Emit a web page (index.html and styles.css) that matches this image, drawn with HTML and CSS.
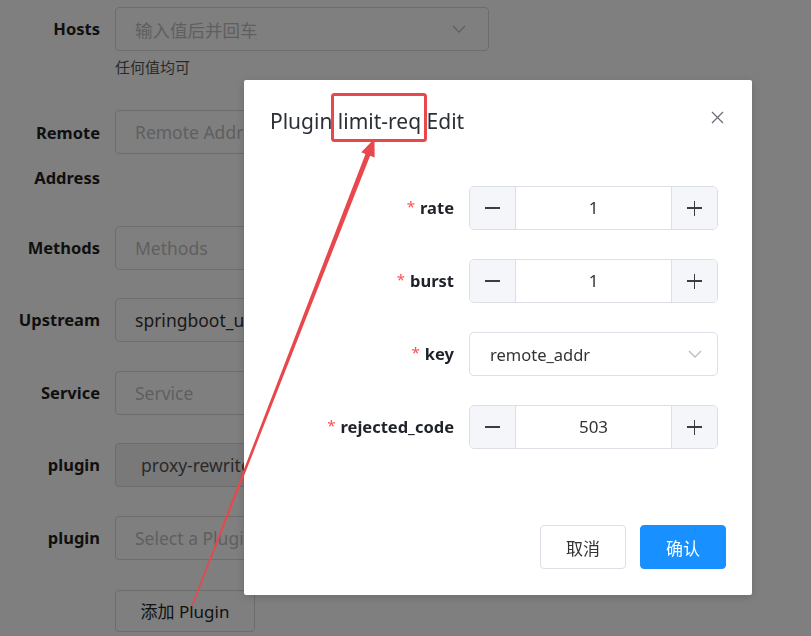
FILE: index.html
```html
<!doctype html>
<html>
<head>
<meta charset="utf-8">
<title>Route Edit</title>
<link rel="stylesheet" href="styles.css">
</head>
<body>
<div class="page">
  <div class="row">
    <label class="lbl">Hosts</label>
    <div class="field">
      <div class="input">
        <span class="ph">输入值后并回车</span>
        <svg class="chev" width="14" height="8" viewBox="0 0 14 8"><path d="M1 1 L7 7 L13 1" fill="none" stroke="#bfbfbf" stroke-width="1.4"/></svg>
      </div>
      <div class="help">任何值均可</div>
    </div>
  </div>
  <div class="row tall">
    <label class="lbl">Remote Address</label>
    <div class="field"><div class="input"><span class="ph">Remote Address</span></div></div>
  </div>
  <div class="row">
    <label class="lbl">Methods</label>
    <div class="field"><div class="input"><span class="ph">Methods</span></div></div>
  </div>
  <div class="row">
    <label class="lbl">Upstream</label>
    <div class="field"><div class="input"><span class="val">springboot_upstream</span></div></div>
  </div>
  <div class="row">
    <label class="lbl">Service</label>
    <div class="field"><div class="input"><span class="ph">Service</span></div></div>
  </div>
  <div class="row">
    <label class="lbl">plugin</label>
    <div class="field"><div class="input disabled"><span class="dis">proxy-rewrite</span></div></div>
  </div>
  <div class="row">
    <label class="lbl">plugin</label>
    <div class="field"><div class="input"><span class="ph">Select a Plugin</span></div></div>
  </div>
  <div class="row">
    <span></span>
    <div class="field"><button class="add">添加 Plugin</button></div>
  </div>
</div>

<div class="mask"></div>

<div class="modal">
  <div class="modal-head">
    <div class="modal-title">Plugin limit-req Edit</div>
    <svg class="close" width="13" height="13" viewBox="0 0 13 13"><path d="M1 1 L12 12 M12 1 L1 12" stroke="#6b6f78" stroke-width="1.3"/></svg>
  </div>
  <div class="modal-body">
    <label class="mlbl"><i>*</i>rate</label>
    <div class="num"><span class="step"><b class="minus"></b></span><span class="numval">1</span><span class="step"><b class="plus"></b></span></div>

    <label class="mlbl"><i>*</i>burst</label>
    <div class="num"><span class="step"><b class="minus"></b></span><span class="numval">1</span><span class="step"><b class="plus"></b></span></div>

    <label class="mlbl"><i>*</i>key</label>
    <div class="sel">
      <span>remote_addr</span>
      <svg width="14" height="8" viewBox="0 0 14 8"><path d="M1 1 L7 7 L13 1" fill="none" stroke="#b8bcc4" stroke-width="1.3"/></svg>
    </div>

    <label class="mlbl"><i>*</i>rejected_code</label>
    <div class="num"><span class="step"><b class="minus"></b></span><span class="numval">503</span><span class="step"><b class="plus"></b></span></div>
  </div>
  <div class="modal-foot">
    <button class="btn">取消</button>
    <button class="btn primary">确认</button>
  </div>
</div>

<svg class="marks" width="811" height="636" viewBox="0 0 811 636">
  <rect x="332.5" y="94.5" width="93" height="46" rx="2" fill="none" stroke="#e8474c" stroke-width="3"/>
  <polygon fill="#e8474c" points="191.3,605.8 365.5,153.9 361.3,152.3 374.5,138.5 374.6,157.4 370.1,155.7 192.7,606.3"/>
</svg>
</body>
</html>
```

FILE: styles.css
```css
body{
	margin:0;
	background:#fff;
	font-family:"Noto Sans","Noto Sans CJK SC",sans-serif;
	color:#1f1f1f;
	width:811px;
	height:636px;
	overflow:hidden;
}

.page{ padding-top:7px;}
.row{
	display:grid;
	grid-template-columns:100px 374px;
	column-gap:15px;
	margin-bottom:28.5px;
}
.row.tall{ margin-bottom:26px;}
.row.tall .lbl{ line-height:45px;}
.lbl{
	font-size:16.5px;
	font-weight:700;
	text-align:right;
	line-height:44px;
	color:#1f1f1f;
}
.input{
	height:44px;
	box-sizing:border-box;
	border:1px solid #d9d9d9;
	border-radius:4px;
	display:flex;
	align-items:center;
	justify-content:space-between;
	padding:0 20px 0 19px;
	font-size:17.5px;
}
.input.disabled{ background:#f3f3f3;}
.ph{ color:#bfbfbf;}
.val{ color:#333;}
.dis{ color:#555; padding-left:6px;}
.chev{ margin-right:2px;}
.help{
	font-size:15px;
	color:#555;
	padding-top:4px;
	line-height:24px;
	margin-bottom:2px;
}
.add{
	width:140px;
	height:42px;
	background:#fff;
	border:1px solid #d9d9d9;
	border-radius:4px;
	font-family:inherit;
	font-size:17px;
	color:#262626;
	margin-top:1.5px;
}

/* overlay */
.mask{
	position:fixed;
	left:0; top:0; right:0; bottom:0;
	background:rgba(0,0,0,0.5);
}
.modal{
	position:absolute;
	left:244px;
	top:80px;
	width:508px;
	height:515px;
	background:#fff;
	border-radius:2px;
	box-shadow:0 2px 8px rgba(0,0,0,0.15);
}
.modal-head{
	display:flex;
	justify-content:space-between;
	padding:26px 28px 0 26px;
}
.modal-title{
	font-size:21px;
	line-height:30px;
	color:#2b2f36;
}
.close{ margin-top:5px;}

.modal-body{
	display:grid;
	grid-template-columns:184px 249px;
	column-gap:15px;
	row-gap:29px;
	padding:50px 34px 0 26px;
}
.mlbl{
	font-size:16.5px;
	font-weight:700;
	text-align:right;
	line-height:44px;
	color:#1f2329;
}
.mlbl i{
	font-style:normal;
	font-weight:400;
	color:#ff4d4f;
	font-size:15px;
	margin-right:5px;
	position:relative;
	top:-2px;
}
.num{
	height:44px;
	box-sizing:border-box;
	border:1px solid #dcdfe6;
	border-radius:5px;
	display:flex;
	overflow:hidden;
}
.step{
	width:45px;
	background:#f5f6fa;
	display:flex;
	align-items:center;
	justify-content:center;
}
.step:first-child{ border-right:1px solid #dcdfe6;}
.step:last-child{ border-left:1px solid #dcdfe6;}
.minus,.plus{
	display:block;
	width:15px;
	height:1.5px;
	background:#3a3d44;
	position:relative;
}
.plus:after{
	content:"";
	position:absolute;
	left:6.75px;
	top:-6.75px;
	width:1.5px;
	height:15px;
	background:#3a3d44;
}
.numval{
	flex:1;
	text-align:center;
	line-height:42px;
	font-size:17px;
	color:#333;
}
.sel{
	height:44px;
	box-sizing:border-box;
	border:1px solid #dcdfe6;
	border-radius:5px;
	display:flex;
	align-items:center;
	justify-content:space-between;
	padding:0 15px 0 20px;
	font-size:16.5px;
	color:#333;
}

.modal-foot{
	display:flex;
	justify-content:flex-end;
	gap:14px;
	padding:76px 26px 26px;
}
.btn{
	width:86px;
	height:44px;
	border:1px solid #dcdfe6;
	border-radius:4px;
	background:#fff;
	font-family:inherit;
	font-size:17px;
	color:#333;
}
.btn.primary{
	background:#1890ff;
	border-color:#1890ff;
	color:#fff;
}

.marks{
	position:absolute;
	left:0;
	top:0;
	pointer-events:none;
}
```
